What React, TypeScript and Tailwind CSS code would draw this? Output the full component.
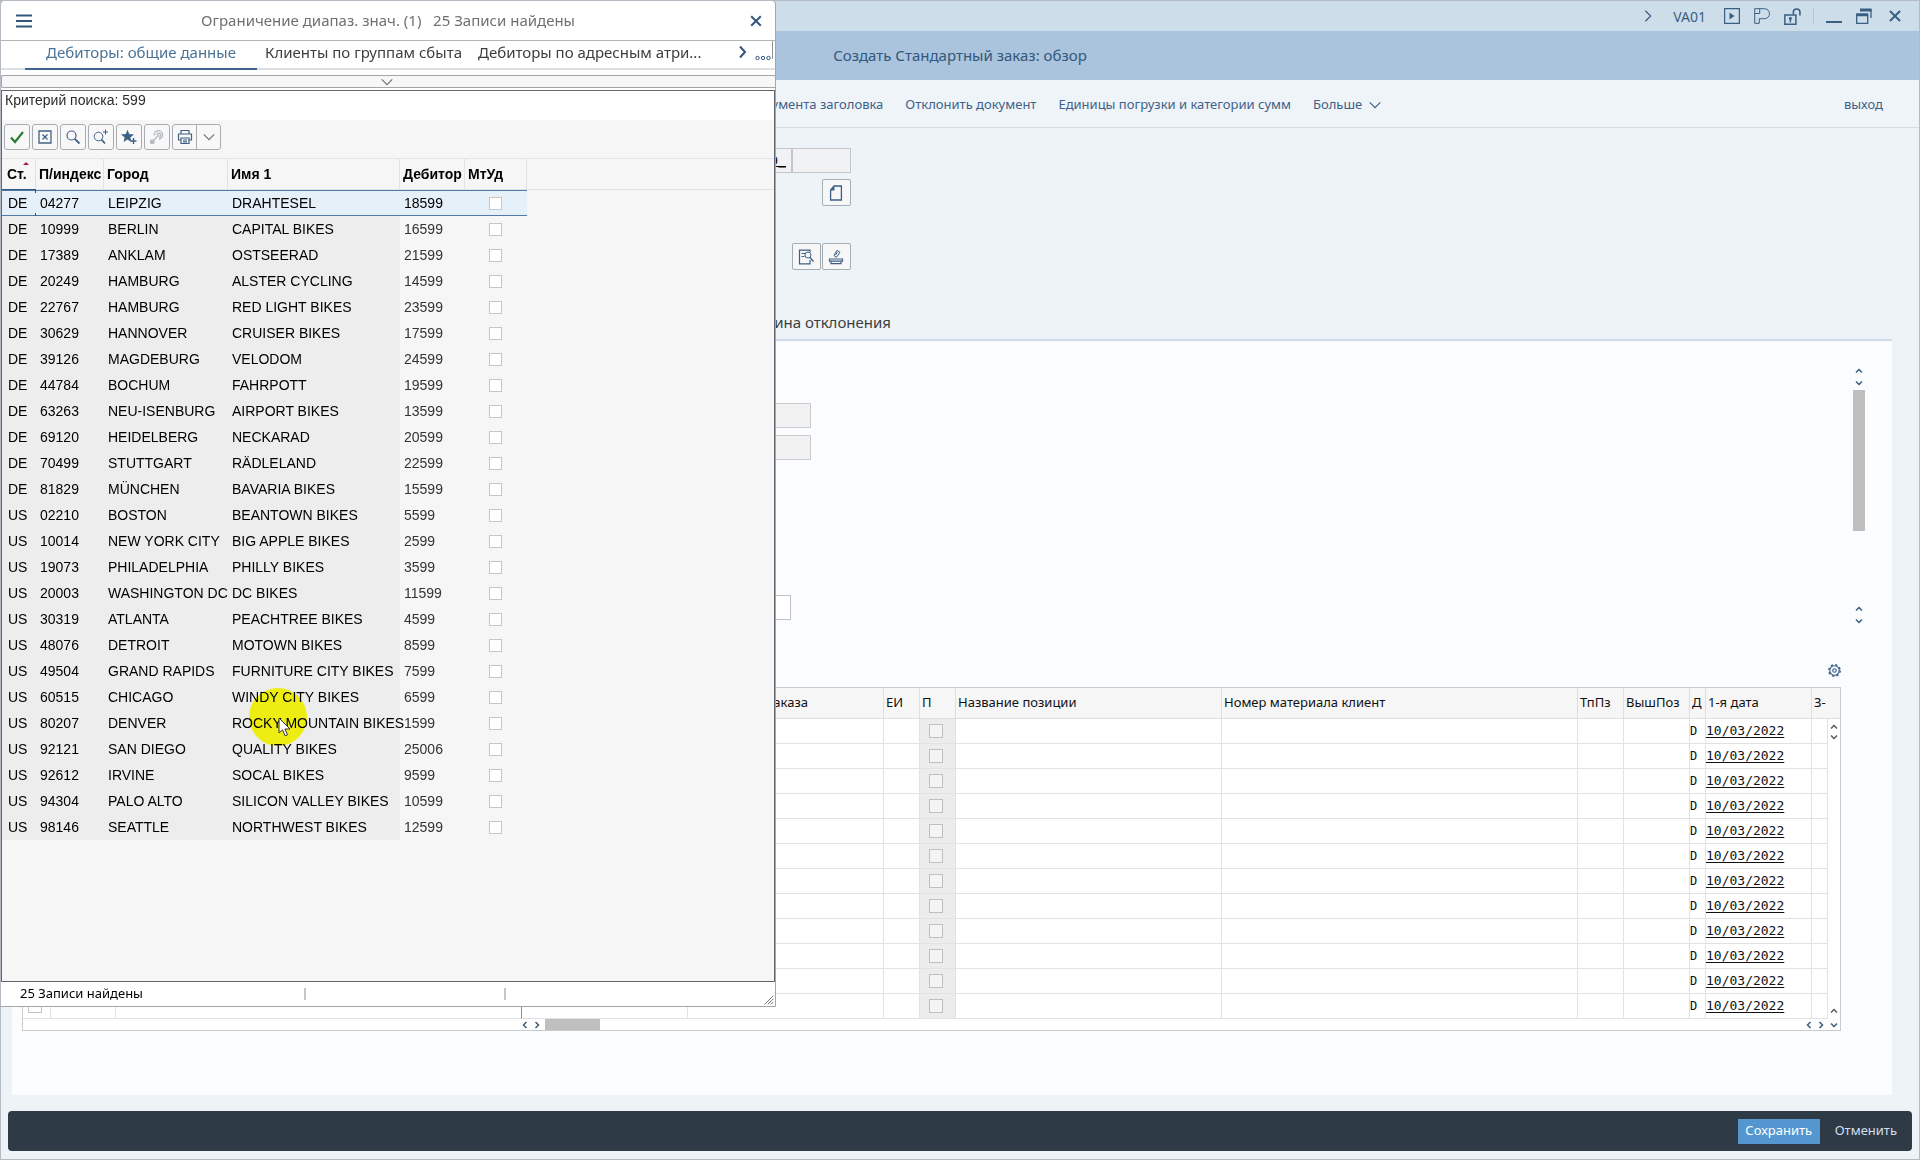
import type { ReactNode } from "react";

const customers = [
  ["DE", "04277", "LEIPZIG", "DRAHTESEL", "18599"],
  ["DE", "10999", "BERLIN", "CAPITAL BIKES", "16599"],
  ["DE", "17389", "ANKLAM", "OSTSEERAD", "21599"],
  ["DE", "20249", "HAMBURG", "ALSTER CYCLING", "14599"],
  ["DE", "22767", "HAMBURG", "RED LIGHT BIKES", "23599"],
  ["DE", "30629", "HANNOVER", "CRUISER BIKES", "17599"],
  ["DE", "39126", "MAGDEBURG", "VELODOM", "24599"],
  ["DE", "44784", "BOCHUM", "FAHRPOTT", "19599"],
  ["DE", "63263", "NEU-ISENBURG", "AIRPORT BIKES", "13599"],
  ["DE", "69120", "HEIDELBERG", "NECKARAD", "20599"],
  ["DE", "70499", "STUTTGART", "RÄDLELAND", "22599"],
  ["DE", "81829", "MÜNCHEN", "BAVARIA BIKES", "15599"],
  ["US", "02210", "BOSTON", "BEANTOWN BIKES", "5599"],
  ["US", "10014", "NEW YORK CITY", "BIG APPLE BIKES", "2599"],
  ["US", "19073", "PHILADELPHIA", "PHILLY BIKES", "3599"],
  ["US", "20003", "WASHINGTON DC", "DC BIKES", "11599"],
  ["US", "30319", "ATLANTA", "PEACHTREE BIKES", "4599"],
  ["US", "48076", "DETROIT", "MOTOWN BIKES", "8599"],
  ["US", "49504", "GRAND RAPIDS", "FURNITURE CITY BIKES", "7599"],
  ["US", "60515", "CHICAGO", "WINDY CITY BIKES", "6599"],
  ["US", "80207", "DENVER", "ROCKY MOUNTAIN BIKES", "1599"],
  ["US", "92121", "SAN DIEGO", "QUALITY BIKES", "25006"],
  ["US", "92612", "IRVINE", "SOCAL BIKES", "9599"],
  ["US", "94304", "PALO ALTO", "SILICON VALLEY BIKES", "10599"],
  ["US", "98146", "SEATTLE", "NORTHWEST BIKES", "12599"],
];

const orderRows = Array.from({ length: 12 }, (_, i) => i);

function Svg({
  children,
  size = 16,
  className = "",
}: {
  children: ReactNode;
  size?: number;
  className?: string;
}) {
  return (
    <svg
      width={size}
      height={size}
      viewBox="0 0 16 16"
      fill="none"
      stroke="currentColor"
      aria-hidden="true"
      className={`shrink-0 ${className}`}
    >
      {children}
    </svg>
  );
}

function Chevron({ dir, size = 8 }: { dir: "up" | "down" | "left" | "right"; size?: number }) {
  const paths = {
    up: "M2 11 8 5l6 6",
    down: "M2 5l6 6 6-6",
    left: "M11 2 5 8l6 6",
    right: "M5 2l6 6-6 6",
  };
  return (
    <Svg size={size}>
      <path d={paths[dir]} strokeWidth={size > 8 ? 1.4 : 3} />
    </Svg>
  );
}

function ToolButton({ label, children }: { label: string; children: ReactNode }) {
  return (
    <button
      type="button"
      aria-label={label}
      className="flex size-[26px] items-center justify-center rounded-[3px] border border-[#a9adb1] bg-[#f8f8f8] text-[#3f6186]"
    >
      {children}
    </button>
  );
}

function FormButton({ label, children }: { label: string; children: ReactNode }) {
  return (
    <button
      type="button"
      aria-label={label}
      className="flex h-[27px] w-[29px] items-center justify-center rounded-[2px] border border-[#a5adb5] bg-[#f7f7f8] pr-0.5 text-[#3f5f86]"
    >
      {children}
    </button>
  );
}

/* Окно выбора дебитора */
function SearchDialog() {
  return (
    <section
      role="dialog"
      aria-label="Ограничение диапаз. знач."
      className="absolute -top-px -left-px z-10 w-[776px] rounded-t-[4px] border border-[#a3a7ab] bg-white"
    >
      <header className="flex h-10 items-center border-b border-[#b3b5b7] pr-[11px] pl-[15px]">
        <button type="button" aria-label="Меню" className="text-[#33567f]">
          <Svg>
            <path d="M0 2.5h16M0 8h16M0 13.5h16" strokeWidth="2" />
          </Svg>
        </button>
        <h2 className="flex-1 pr-1 text-center text-[15px] whitespace-pre text-[#6e7174]">
          {"Ограничение диапаз. знач. (1)   25 Записи найдены"}
        </h2>
        <button type="button" aria-label="Закрыть" className="text-[#33567f]">
          <Svg>
            <path d="M3.2 3.2l9.6 9.6M12.8 3.2l-9.6 9.6" strokeWidth="2" />
          </Svg>
        </button>
      </header>

      <nav className="flex h-[29px] items-stretch border-b-2 border-[#dcdfe2] text-[15px] text-[#3c3e40]">
        <a
          href="#general"
          className="-mb-0.5 ml-6 w-[232px] border-b-2 border-[#41658c] text-center leading-[23px] text-[#4b7396]"
        >
          Дебиторы: общие данные
        </a>
        <a href="#groups" className="ml-2 leading-[22px]">
          Клиенты по группам сбыта
        </a>
        <a href="#address" className="ml-4 leading-[22px]">
          Дебиторы по адресным атри...
        </a>
        <div className="mr-0.5 ml-auto flex h-[18px] items-center gap-1 border-r border-[#8f9296] pr-px text-[#33567f]">
          <button type="button" aria-label="Следующая вкладка" className="pt-1">
            <Svg>
              <path d="M5 2.5l5 5.5-5 5.5" strokeWidth="2" />
            </Svg>
          </button>
          <button type="button" aria-label="Все вкладки" className="pt-4">
            <Svg>
              <circle cx="2.5" cy="8" r="1.7" />
              <circle cx="8" cy="8" r="1.7" />
              <circle cx="13.5" cy="8" r="1.7" />
            </Svg>
          </button>
        </div>
      </nav>

      <button
        type="button"
        aria-label="Развернуть"
        className="mt-[5px] flex h-[13px] w-full items-center justify-center rounded-l-[2px] border border-r-0 border-[#a3a6a9] bg-[#f7f7f7] pr-1 text-[#6e7274]"
      >
        <Chevron dir="down" size={14} />
      </button>

      <div className="mt-0.5 border border-[#63666a] bg-[#f6f6f6] font-['Liberation_Sans',Arial,sans-serif] text-[14px] text-black">
        <p className="h-[29px] bg-white pl-[3px] leading-[18px] text-[#2c2c2c]">
          Критерий поиска: 599
        </p>

        <div className="flex h-[39px] items-center gap-0.5 border-b border-[#e2e4e6] pb-1 pl-0.5">
          <ToolButton label="Принять">
            <Svg className="text-[#2c7d36]">
              <path d="M2 8.5l4 4.5L14 3" strokeWidth="2.2" />
            </Svg>
          </ToolButton>
          <ToolButton label="Закрыть список">
            <Svg>
              <path d="M2 2h12v12H2zM5.5 5.5l5 5M10.5 5.5l-5 5" strokeWidth="1.3" />
            </Svg>
          </ToolButton>
          <ToolButton label="Поиск">
            <Svg>
              <circle cx="6.5" cy="6.5" r="4.5" strokeWidth="1.2" />
              <path d="M9.8 9.8l4.7 4.7" strokeWidth="1.8" />
            </Svg>
          </ToolButton>
          <ToolButton label="Искать дальше">
            <Svg>
              <circle cx="5.5" cy="7.5" r="4.3" />
              <path d="M8.5 10.7l3.5 3.8" strokeWidth="1.7" />
              <path d="M12.5.5v5M10 3h5" />
            </Svg>
          </ToolButton>
          <ToolButton label="В избранное">
            <Svg>
              <path
                d="M6.5.8l1.7 4.3 4.8.3-3.7 3 1.2 4.6-4-2.6-4 2.6 1.2-4.6-3.7-3 4.8-.3z"
                fill="currentColor"
                stroke="none"
              />
              <path d="M12.5 9v6M9.5 12h6" strokeWidth="1.4" />
            </Svg>
          </ToolButton>
          <ToolButton label="Персональные значения">
            <Svg className="text-[#b4bcc6]">
              <path
                d="M5.2 6.5A4.2 4.2 0 1 1 10 10M7.8 6a1.9 1.9 0 1 1 2.2 2M9.8 6 5 11"
                strokeWidth="1.4"
              />
              <path d="M1.5 14.5v-3.5h3.5v3.5z" fill="currentColor" />
            </Svg>
          </ToolButton>
          <div className="flex h-[26px] w-[49px] divide-x divide-[#a9adb1] rounded-[3px] border border-[#a9adb1] bg-[#f8f8f8] text-[#3f6186]">
            <button type="button" aria-label="Печать" className="flex flex-1 items-center justify-center">
              <Svg>
                <path d="M4 5V1.5h8V5M4 11H1.5V5h13v6H12M4 9h8v5.5H4zM6 11h4M6 12.8h4" strokeWidth="1.2" />
              </Svg>
            </button>
            <button type="button" aria-label="Варианты печати" className="flex flex-1 items-center justify-center text-[#70757a]">
              <Chevron dir="down" size={14} />
            </button>
          </div>
        </div>

        <div className="h-[822px]">
          <table className="w-full table-fixed border-separate border-spacing-0">
            <colgroup>
              <col className="w-[34px]" />
              <col className="w-[68px]" />
              <col className="w-[124px]" />
              <col className="w-[172px]" />
              <col className="w-[65px]" />
              <col className="w-[62px]" />
              <col />
            </colgroup>
            <thead>
              <tr className="h-[31px] text-left *:border-r *:border-b *:border-[#e0e2e4] *:p-0 *:pl-[3px] *:whitespace-nowrap">
                <th className="relative">
                  <span className="ml-0.5">Ст.</span>
                  <span className="absolute top-[3px] right-1.5 border-x-[3px] border-b-[3px] border-x-transparent border-b-[#a3203c]" />
                </th>
                <th>П/индекс</th>
                <th>Город</th>
                <th>Имя 1</th>
                <th>Дебитор</th>
                <th>МтУд</th>
                <td className="border-r-0!" />
              </tr>
            </thead>
            <tbody>
              {customers.map(([country, zip, city, name, id], i) => (
                <tr
                  key={id}
                  className={
                    i === 0
                      ? "h-[26px] *:border-[#4f7ba6] *:bg-[#e6f0f8] *:p-0 *:pl-1 *:not-last:border-y"
                      : "h-[26px] *:bg-[#ededed] *:p-0 *:pl-1 *:whitespace-nowrap"
                  }
                >
                  <td className="relative">
                    {i === 0 && (
                      <>
                        <span className="absolute -top-0.5 left-0 h-1 w-full border-t border-r border-[#2f5582]" />
                        <span className="absolute -bottom-0.5 left-0 h-1 w-full border-r border-b border-[#2f5582]" />
                      </>
                    )}
                    <span className="ml-0.5">{country}</span>
                  </td>
                  <td>{zip}</td>
                  <td>{city}</td>
                  <td>{name}</td>
                  <td className={i === 0 ? "" : "bg-[#f6f6f6]! text-[#333]"}>{id}</td>
                  <td className={i === 0 ? "" : "bg-[#f6f6f6]!"}>
                    <input
                      type="checkbox"
                      aria-label={`МтУд ${id}`}
                      className="ml-5 block size-[13px] appearance-none border border-[#c6c6c6] bg-white"
                    />
                  </td>
                  <td className="bg-[#f6f6f6]!" />
                </tr>
              ))}
            </tbody>
          </table>
        </div>
      </div>

      <footer className="flex h-6 items-center justify-between pl-[19px] text-[13px] text-black">
        <span className="w-[284px]">25 Записи найдены</span>
        <span className="h-3 w-0.5 bg-[#c4c6c8]" />
        <span className="ml-[198px] h-3 w-0.5 bg-[#c4c6c8]" />
        <Svg size={10} className="mt-3 mr-px ml-auto text-[#777]">
          <path d="M1 15 15 1M6 15l9-9M11 15l4-4" strokeWidth="1.6" />
        </Svg>
      </footer>

      {/* указатель мыши с подсветкой */}
      <div className="pointer-events-none absolute top-[687px] left-[248px] size-[58px] rounded-full bg-[#ffff12] mix-blend-multiply" />
      <svg
        width="13"
        height="20"
        viewBox="0 0 13 20"
        aria-hidden="true"
        className="pointer-events-none absolute top-[716px] left-[277px]"
      >
        <path
          d="M1 1v15l3.5-3.2 2.6 6 2.4-1-2.6-5.8H12z"
          fill="#fff"
          stroke="#333"
        />
      </svg>
    </section>
  );
}

function OrderTable() {
  return (
    <div className="mr-[51px] ml-[10px] border border-[#c9cbcd] bg-white">
      <div className="relative">
        <table className="w-full table-fixed border-separate border-spacing-0 text-[13px] text-[#111]">
          <colgroup>
            <col className="w-[28px]" />
            <col className="w-[65px]" />
            <col className="w-[406px]" />
            <col className="w-[166px]" />
            <col className="w-[196px]" />
            <col className="w-[36px]" />
            <col className="w-[36px]" />
            <col className="w-[266px]" />
            <col />
            <col className="w-[46px]" />
            <col className="w-[66px]" />
            <col className="w-[16px]" />
            <col className="w-[106px]" />
            <col className="w-[28px]" />
          </colgroup>
          <thead>
            <tr className="h-[31px] bg-[#f6f6f7] text-left *:overflow-hidden *:border-r *:border-b *:border-[#dcdee0] *:p-0 *:pl-0.5 *:font-normal *:whitespace-nowrap">
              <td />
              <td />
              <td />
              <td />
              <th>Количество заказа</th>
              <th>ЕИ</th>
              <th>П</th>
              <th>Название позиции</th>
              <th>Номер материала клиент</th>
              <th>ТпПз</th>
              <th>ВышПоз</th>
              <th>Д</th>
              <th>1-я дата</th>
              <th className="border-r-0!">З-</th>
            </tr>
          </thead>
          <tbody>
            {orderRows.map((row) => (
              <tr
                key={row}
                className="h-[25px] *:border-r *:border-b *:border-[#e0e2e4] *:p-0"
              >
                <td>
                  <input
                    type="checkbox"
                    aria-label={`Строка ${row + 1}`}
                    className="ml-[5px] block size-[14px] appearance-none border border-[#c4c4c4]"
                  />
                </td>
                <td />
                <td className="border-r-[#8d9093]!" />
                <td />
                <td />
                <td />
                <td className="bg-[#ececec]">
                  <input
                    type="checkbox"
                    aria-label={`П ${row + 1}`}
                    className="ml-[9px] block size-[14px] appearance-none border border-[#bfbfbf] bg-[#f4f4f4]"
                  />
                </td>
                <td />
                <td />
                <td />
                <td />
                <td className="font-['DejaVu_Sans_Mono',monospace] text-[12px]">D</td>
                <td className="font-['DejaVu_Sans_Mono',monospace] underline underline-offset-2">
                  10/03/2022
                </td>
                <td className="border-r-0!" />
              </tr>
            ))}
          </tbody>
        </table>
        <div className="absolute top-[31px] right-0 bottom-0 flex w-[13px] flex-col items-center border-l border-[#e0e2e4] bg-white py-1 text-[#555c63]">
          <Chevron dir="up" />
          <span className="h-0.5" />
          <Chevron dir="down" />
          <span className="flex-1" />
          <Chevron dir="up" />
        </div>
      </div>
      <div className="flex h-[11px] items-center text-[#3d5e78]">
        <span className="w-[498px]" />
        <Chevron dir="left" />
        <span className="w-1" />
        <Chevron dir="right" />
        <span className="ml-1 h-full w-[55px] bg-[#bfbfbf]" />
        <span className="flex-1" />
        <Chevron dir="left" />
        <span className="w-1" />
        <Chevron dir="right" />
        <span className="w-[5px]" />
        <Chevron dir="down" />
        <span className="w-0.5" />
      </div>
    </div>
  );
}

export default function App() {
  return (
    <main className="relative flex min-h-screen flex-col overflow-hidden border border-[#b4bbc3] bg-[#edf3f7] font-['Noto_Sans','Open_Sans',sans-serif]">
      {/* Строка заголовка окна */}
      <div className="flex h-[30px] items-center justify-end bg-[#cdddea] pr-[15px] text-[14px] text-[#3b5f83]">
        <Chevron dir="right" size={14} />
        <span className="mx-[18px]">VA01</span>
        <button type="button" aria-label="Выполнить">
          <Svg>
            <path d="M.6.6h14.8v14.8H.6z" strokeWidth="1.2" />
            <path d="M5.5 4.5v7l5-3.5z" fill="currentColor" stroke="none" />
          </Svg>
        </button>
        <button type="button" aria-label="Параметры" className="ml-3.5">
          <Svg>
            <path d="M.7 15.3V.7h9.8a5 5 0 0 1 0 10H5.3v4.6zM.7 5.5h5V.7" />
          </Svg>
        </button>
        <button type="button" aria-label="Разблокировать" className="ml-3.5">
          <Svg size={17}>
            <path d="M.8 6.5h10.4v8.7H.8z" strokeWidth="1.4" />
            <path d="M8.8 6V4a3 3 0 0 1 6.2 0v3" strokeWidth="1.5" />
            <circle cx="6" cy="9.8" r="1.4" fill="currentColor" stroke="none" />
            <path d="M6 10v3.5" strokeWidth="1.4" />
          </Svg>
        </button>
        <span className="mx-3 h-4 w-px bg-[#b4c4d4]" />
        <button type="button" aria-label="Свернуть">
          <Svg>
            <path d="M0 14h16" strokeWidth="2" />
          </Svg>
        </button>
        <button type="button" aria-label="Восстановить" className="ml-3.5">
          <Svg>
            <path d="M.7 7h11v8.3H.7z" strokeWidth="1.3" />
            <path d="M.2 6.8h12M4 2h11.5" strokeWidth="3" />
            <path d="M15 1v9" strokeWidth="1.3" />
          </Svg>
        </button>
        <button type="button" aria-label="Закрыть окно" className="ml-3.5">
          <Svg size={18}>
            <path d="M3.5 3.5l9 9M12.5 3.5l-9 9" strokeWidth="1.8" />
          </Svg>
        </button>
      </div>

      <h1 className="h-[49px] bg-[#a9c4dc] text-center text-[15px] leading-[48px] text-[#33577d]">
        Создать Стандартный заказ: обзор
      </h1>

      <nav className="flex h-12 items-center gap-[22px] border-b border-[#d3dde6] bg-[#eef4f8] pt-0.5 pr-9 pl-[748px] text-[13px] whitespace-nowrap text-[#3f6188]">
        <a href="#header-doc">документа заголовка</a>
        <a href="#reject">Отклонить документ</a>
        <a href="#units">Единицы погрузки и категории сумм</a>
        <button type="button" className="flex items-center gap-1.5">
          Больше <Chevron dir="down" size={14} />
        </button>
        <a href="#exit" className="ml-auto">
          выход
        </a>
      </nav>

      {/* Данные заголовка заказа */}
      <section className="flex w-[850px] flex-col items-end pt-5">
        <div className="flex">
          <input
            aria-label="Стоимость нетто"
            defaultValue="0,00_"
            className="h-[25px] w-[200px] border border-[#c3c7cb] bg-[#f1f2f3] pr-[5px] text-right font-['DejaVu_Sans_Mono',monospace] text-[13px] underline"
          />
          <input
            aria-label="Валюта"
            className="h-[25px] w-[59px] border border-[#c3c7cb] bg-[#f1f2f3]"
          />
        </div>
        <div className="mt-1.5">
          <FormButton label="Создать">
            <Svg>
              <path d="M6 1h7.4v14H2.6V5z" strokeWidth="1.3" />
              <path d="M6.5 1v4.5h-4z" fill="currentColor" stroke="none" />
            </Svg>
          </FormButton>
        </div>
        <div className="mt-[37px] flex gap-px">
          <FormButton label="Просмотр документа">
            <Svg>
              <path d="M12 3V1.2H1.5v13.6H12V11M3.5 4.5h4M3.5 7.5h3" strokeWidth="1.2" />
              <circle cx="10" cy="6" r="3" />
              <path d="M12 8.5l3.5 4" strokeWidth="1.4" />
            </Svg>
          </FormButton>
          <FormButton label="Согласование">
            <Svg>
              <path d="M6 6.5 9 1.3l3 2-3.5 5zM7.5 6l2-3" />
              <path d="M1.5 10h13v2.2h-13zM3 12.5v2.2h10v-2.2" strokeWidth="1.2" />
            </Svg>
          </FormButton>
        </div>
      </section>
      <a
        href="#reason"
        className="flex h-[69px] w-[890px] items-end justify-end pb-1.5 text-[15px] text-[#3c3f42]"
      >
        Причина отклонения
      </a>

      <section className="mr-[27px] ml-[11px] flex flex-1 flex-col border-t-2 border-[#d0dcea] bg-[#fbfcfe]">
        <div className="flex justify-between pr-[26px]">
          <div className="flex w-[799px] flex-col items-end pt-[62px]">
            <input
              aria-label="Код инкотермс"
              className="h-[25px] w-[240px] border border-[#cacccf] bg-[#f2f2f2]"
            />
            <input
              aria-label="Место"
              className="mt-[7px] h-[25px] w-[240px] border border-[#cacccf] bg-[#f2f2f2]"
            />
            <input
              aria-label="Причина заказа"
              className="mt-[135px] mr-5 h-[25px] w-[200px] border border-[#bfc1c4] bg-white"
            />
          </div>
          <div className="flex w-[14px] flex-col items-center pt-[26px] text-[#3a5d80]">
            <Chevron dir="up" />
            <span className="h-1" />
            <Chevron dir="down" />
            <span className="mt-[3px] h-[141px] w-3 bg-[#bfbfbf]" />
            <span className="h-[74px]" />
            <Chevron dir="up" />
            <span className="h-1" />
            <Chevron dir="down" />
          </div>
        </div>
        <div className="flex justify-end pt-[39px] pr-[51px] pb-2.5">
          <button type="button" aria-label="Настройки таблицы" className="text-[#3a5f86]">
            <Svg size={13}>
              <circle cx="8" cy="8" r="5.8" strokeWidth="1.4" />
              <circle cx="8" cy="8" r="7" strokeWidth="1.8" strokeDasharray="2.75 2.75" />
              <circle cx="8" cy="8" r="2.2" strokeWidth="1.4" />
            </Svg>
          </button>
        </div>
        <OrderTable />
      </section>

      <footer className="mx-[7px] mt-4 mb-2 flex h-10 items-center justify-end gap-[11px] rounded-[4px] bg-[#2e3b47] pr-[11px] text-[13px]">
        <button type="button" className="h-[25px] w-[82px] bg-[#5496cf] text-white">
          Сохранить
        </button>
        <button type="button" className="h-[25px] px-1 text-[#d1dfed]">
          Отменить
        </button>
      </footer>

      <SearchDialog />
    </main>
  );
}
